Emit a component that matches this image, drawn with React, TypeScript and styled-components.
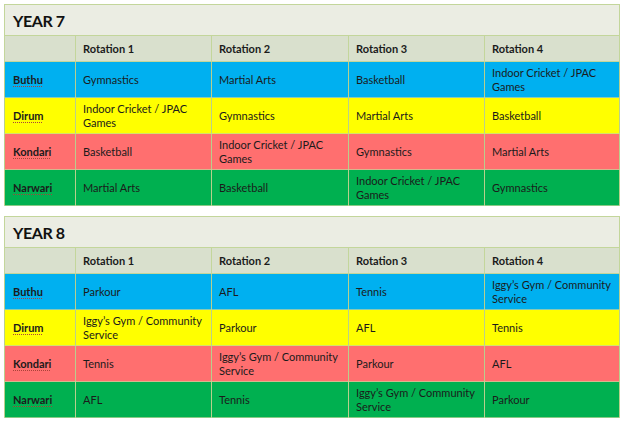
import React from 'react';
import styled, { createGlobalStyle } from 'styled-components';

type House = 'Buthu' | 'Dirum' | 'Kondari' | 'Narwari';

interface YearPlan {
    title: string;
    rows: { house: House; slots: string[] }[];
}

const houseColors: Record<House, string> = {
    Buthu: '#00b0f0',
    Dirum: '#ffff00',
    Kondari: '#ff6f6f',
    Narwari: '#00b050',
};

const years: YearPlan[] = [
    {
        title: 'YEAR 7',
        rows: [
            { house: 'Buthu', slots: ['Gymnastics', 'Martial Arts', 'Basketball', 'Indoor Cricket / JPAC Games'] },
            { house: 'Dirum', slots: ['Indoor Cricket / JPAC Games', 'Gymnastics', 'Martial Arts', 'Basketball'] },
            { house: 'Kondari', slots: ['Basketball', 'Indoor Cricket / JPAC Games', 'Gymnastics', 'Martial Arts'] },
            { house: 'Narwari', slots: ['Martial Arts', 'Basketball', 'Indoor Cricket / JPAC Games', 'Gymnastics'] },
        ],
    },
    {
        title: 'YEAR 8',
        rows: [
            { house: 'Buthu', slots: ['Parkour', 'AFL', 'Tennis', 'Iggy’s Gym / Community Service'] },
            { house: 'Dirum', slots: ['Iggy’s Gym / Community Service', 'Parkour', 'AFL', 'Tennis'] },
            { house: 'Kondari', slots: ['Tennis', 'Iggy’s Gym / Community Service', 'Parkour', 'AFL'] },
            { house: 'Narwari', slots: ['AFL', 'Tennis', 'Iggy’s Gym / Community Service', 'Parkour'] },
        ],
    },
];

const colWidths = [71, 136, 137, 136, 135];

export default function App() {
    return (
        <>
            <GlobalStyle />
            <Page>
                {years.map((year) => (
                    <Schedule key={year.title}>
                        <colgroup>
                            {colWidths.map((w, i) => (
                                <col key={i} style={{ width: w }} />
                            ))}
                        </colgroup>
                        <thead>
                            <TitleRow>
                                <TitleCell colSpan={5}>{year.title}</TitleCell>
                            </TitleRow>
                            <HeaderRow>
                                <HeaderCell />
                                {[1, 2, 3, 4].map((n) => (
                                    <HeaderCell key={n}>Rotation {n}</HeaderCell>
                                ))}
                            </HeaderRow>
                        </thead>
                        <tbody>
                            {year.rows.map((row) => (
                                <HouseRow key={row.house} $bg={houseColors[row.house]}>
                                    <HouseCell>
                                        <HouseName>{row.house}</HouseName>
                                    </HouseCell>
                                    {row.slots.map((s, i) => (
                                        <Cell key={i}>{s}</Cell>
                                    ))}
                                </HouseRow>
                            ))}
                        </tbody>
                    </Schedule>
                ))}
            </Page>
        </>
    );
}

// Styled Components
const GlobalStyle = createGlobalStyle`
  html, body {
    margin: 0;
    padding: 0;
    background: #ffffff;
  }
  body {
    font-family: Lato, "Open Sans", "Liberation Sans", sans-serif;
    color: #1b1b1b;
  }
`;

const Page = styled.div`
  display: flex;
  flex-direction: column;
  gap: 10px;
  padding: 4px 0 0 4px;
  width: 616px;
`;

const Schedule = styled.table`
  border-collapse: collapse;
  table-layout: fixed;
  width: 615px;
  border: 1px solid #c3d69b;
`;

const TitleRow = styled.tr`
  height: 31px;
  background: #ebede3;
`;

const TitleCell = styled.th`
  text-align: left;
  padding: 0 8px;
  font-size: 16px;
  letter-spacing: -0.4px;
  font-weight: 700;
  color: #111;
  border: 1px solid #c3d69b;
`;

const HeaderRow = styled.tr`
  height: 26px;
  background: #d9e0cd;
`;

const HeaderCell = styled.th`
  text-align: left;
  padding: 0 7px;
  font-size: 11px;
  font-weight: 700;
  color: #1b1b1b;
  border: 1px solid #c3d69b;
`;

const HouseRow = styled.tr<{ $bg: string }>`
  height: 36px;
  background: ${(p) => p.$bg};
`;

const Cell = styled.td`
  padding: 0 3px 0 7px;
  font-size: 11px;
  line-height: 14px;
  vertical-align: middle;
  border-left: 1px solid #b9cf8c;
  border-right: 1px solid #b9cf8c;
  border-top: 1px solid rgba(195, 214, 155, 0.7);
  border-bottom: 1px solid rgba(195, 214, 155, 0.7);
`;

const HouseCell = styled(Cell)`
  padding-left: 8px;
`;

const HouseName = styled.span`
  font-weight: 700;
  text-decoration: underline dotted #a8443a;
  text-decoration-thickness: 1px;
  text-underline-offset: 2px;
`;
